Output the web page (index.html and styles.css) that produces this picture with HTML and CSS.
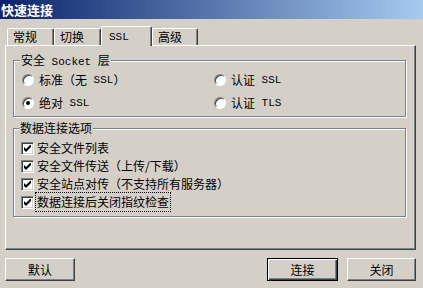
FILE: index.html
```html
<!DOCTYPE html>
<html lang="zh-CN">
<head>
  <meta charset="UTF-8" />
  <title>快速连接</title>
  <link rel="stylesheet" href="styles.css">
</head>
<body>
  <div class="titlebar">快速连接</div>

  <div class="dialog">
    <div class="tabs">
      <div class="tab t1">常规</div>
      <div class="tab t2">切换</div>
      <div class="tab t3 active"><span class="lat">SSL</span></div>
      <div class="tab t4">高级</div>
    </div>

    <div class="panel">
      <fieldset class="group socket">
        <legend>安全<span class="lat"> Socket </span>层</legend>
        <div class="radios">
          <label class="opt"><span class="radio"></span>标准（无<span class="lat"> SSL</span>）</label>
          <label class="opt"><span class="radio"></span>认证<span class="lat"> SSL</span></label>
          <label class="opt"><span class="radio on"></span>绝对<span class="lat"> SSL</span></label>
          <label class="opt"><span class="radio"></span>认证<span class="lat"> TLS</span></label>
        </div>
      </fieldset>

      <fieldset class="group data">
        <legend>数据连接选项</legend>
        <div class="checks">
          <label class="opt"><span class="check"><svg width="7" height="7" viewBox="0 0 7 7"><path d="M0 2v3l2 2l5-5v-3l-5 5z" fill="#000"/></svg></span>安全文件列表</label>
          <label class="opt"><span class="check"><svg width="7" height="7" viewBox="0 0 7 7"><path d="M0 2v3l2 2l5-5v-3l-5 5z" fill="#000"/></svg></span>安全文件传送（上传/下载）</label>
          <label class="opt"><span class="check"><svg width="7" height="7" viewBox="0 0 7 7"><path d="M0 2v3l2 2l5-5v-3l-5 5z" fill="#000"/></svg></span>安全站点对传（不支持所有服务器）</label>
          <label class="opt"><span class="check"><svg width="7" height="7" viewBox="0 0 7 7"><path d="M0 2v3l2 2l5-5v-3l-5 5z" fill="#000"/></svg></span><span class="focus">数据连接后关闭指纹检查</span></label>
        </div>
      </fieldset>
    </div>

    <div class="buttons">
      <button class="btn">默认</button>
      <div class="right">
        <button class="btn default">连接</button>
        <button class="btn close">关闭</button>
      </div>
    </div>
  </div>
</body>
</html>
```

FILE: styles.css
```css
:root {
  --face: #d4d0c8;
  --light: #ffffff;
  --shadow: #808080;
  --dark: #404040;
}
body {
  margin: 0;
  width: 423px;
  height: 288px;
  overflow: hidden;
  background: var(--face);
  color: #000;
  font-family: "SimSun", "Noto Sans CJK SC", sans-serif;
  font-size: 12px;
}
.lat {
  font-family: "Liberation Mono", monospace;
  font-size: 11px;
  white-space: pre;
}
.titlebar {
  height: 19px;
  line-height: 19px;
  padding-left: 1px;
  background: linear-gradient(to right, #0a246a, #a6caf0);
  color: #fff;
  font-size: 13px;
  font-weight: bold;
}
.dialog {
  padding: 0 7px 0 5px;
}
.tabs {
  display: flex;
  align-items: flex-end;
  margin-top: 7px;
  height: 19px;
  position: relative;
  z-index: 1;
}
.tab {
  box-sizing: border-box;
  height: 17px;
  line-height: 15px;
  padding-left: 5px;
  border-top: 1px solid var(--light);
  border-left: 1px solid var(--light);
  border-right: 1px solid var(--dark);
  border-radius: 2px 2px 0 0;
  box-shadow: inset -1px 0 var(--shadow);
}
.t1 { width: 47px; margin-left: 2px; }
.t2 { width: 47px; }
.t3 { width: 51px; }
.t4 { width: 46px; }
.tab.active {
  height: 20px;
  margin-bottom: -1px;
  line-height: 16px;
  padding-left: 7px;
  background: var(--face);
}
.panel {
  box-sizing: border-box;
  width: 411px;
  height: 205px;
  padding-top: 1px;
  border-top: 1px solid var(--light);
  border-left: 1px solid var(--light);
  border-right: 1px solid var(--dark);
  border-bottom: 1px solid var(--dark);
  box-shadow: inset -1px -1px var(--shadow);
}
.group {
  box-sizing: border-box;
  width: 393px;
  margin: 0 0 0 7px;
  padding: 1px 8px 2px 8px;
  border: 1px solid var(--shadow);
  box-shadow: inset 1px 1px var(--light), 1px 1px var(--light);
}
.group legend {
  margin-left: -2px;
  padding: 0 1px;
  line-height: 14px;
  height: 14px;
  background: var(--face);
}
.socket {
  margin-top: 6px;
}
.data {
  margin-top: 4px;
  padding: 4px 8px 5px 7px;
}
.radios {
  display: grid;
  grid-template-columns: 192px auto;
  grid-auto-rows: 23px;
}
.checks {
  display: grid;
  grid-auto-rows: 18px;
}
.opt {
  display: flex;
  align-items: center;
  white-space: pre;
  line-height: 14px;
}
.radio {
  box-sizing: border-box;
  width: 12px;
  height: 12px;
  margin-right: 5px;
  border-radius: 50%;
  background: #fff;
  border: 1px solid;
  border-color: var(--shadow) var(--light) var(--light) var(--shadow);
  box-shadow: inset 1px 1px var(--dark);
  position: relative;
}
.radio.on::after {
  content: "";
  position: absolute;
  left: 3px;
  top: 3px;
  width: 4px;
  height: 4px;
  border-radius: 50%;
  background: #000;
}
.check {
  box-sizing: border-box;
  width: 13px;
  height: 13px;
  margin-right: 3px;
  display: flex;
  align-items: center;
  justify-content: center;
  background: #fff;
  border: 1px solid;
  border-color: var(--shadow) var(--light) var(--light) var(--shadow);
  box-shadow: inset 1px 1px var(--dark), inset -1px -1px var(--face);
}
.focus {
  outline: 1px dotted #000;
  outline-offset: 0;
  padding: 2px 1px;
  margin-left: -1px;
}
.buttons {
  display: flex;
  justify-content: space-between;
  margin-top: 8px;
}
.right {
  display: flex;
  gap: 9px;
}
.btn {
  box-sizing: border-box;
  width: 70px;
  height: 23px;
  padding: 0;
  font: inherit;
  color: #000;
  background: var(--face);
  border: 1px solid;
  border-color: var(--light) var(--dark) var(--dark) var(--light);
  box-shadow: inset -1px -1px var(--shadow);
}
.btn.default {
  width: 71px;
  border: 1px solid #000;
  box-shadow: inset 1px 1px var(--light), inset -1px -1px var(--dark), inset -2px -2px var(--shadow);
}
.btn.close {
  width: 69px;
}
```
